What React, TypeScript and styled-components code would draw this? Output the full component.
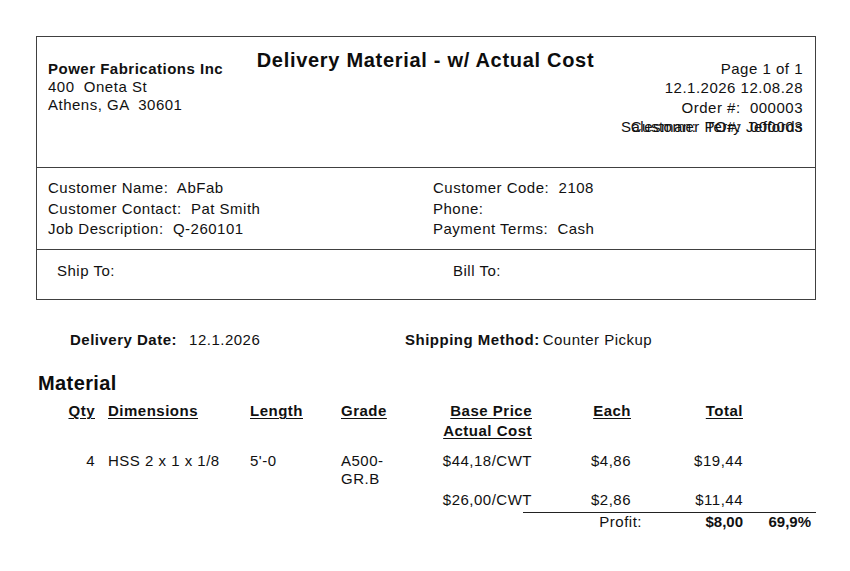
import React from "react";
import styled, { createGlobalStyle } from "styled-components";

const GlobalStyle = createGlobalStyle`
  html, body {
    margin: 0;
    padding: 0;
    background: #ffffff;
  }
  body {
    font-family: "Liberation Sans", Arial, sans-serif;
    color: #111111;
    font-size: 15px;
    letter-spacing: 0.5px;
  }
`;

const Page = styled.div`
  width: 850px;
  height: 571px;
  box-sizing: border-box;
  padding: 36px 0 0 36px;
`;

const Frame = styled.div`
  width: 780px;
  box-sizing: border-box;
  border: 1px solid #404040;
`;

const HeaderSection = styled.div`
  height: 130px;
  box-sizing: border-box;
  display: grid;
  grid-template-columns: 1fr auto 1fr;
  padding: 0 12px 0 11px;
`;

const Block = styled.div<{ $top: number; $align?: string }>`
  padding-top: ${(p) => p.$top}px;
  text-align: ${(p) => p.$align || "left"};
`;

const CompanyName = styled.div`
  font-weight: 700;
  font-size: 15px;
  letter-spacing: 0.5px;
  line-height: 18px;
`;

const Line = styled.div<{ $h?: number }>`
  line-height: ${(p) => p.$h || 18}px;
  white-space: pre;
`;

const Title = styled.h1`
  margin: 0;
  font-size: 20px;
  font-weight: 700;
  letter-spacing: 0.7px;
  line-height: 24px;
  color: #0d0d0d;
  white-space: nowrap;
`;

const Overlay = styled.div`
  display: grid;
  justify-items: end;
  & > * {
    grid-area: 1 / 1;
  }
`;

const Section = styled.div<{ $h: number; $top: number; $left: number; $col: number }>`
  height: ${(p) => p.$h}px;
  box-sizing: border-box;
  border-top: 1px solid #404040;
  padding: ${(p) => p.$top}px 0 0 ${(p) => p.$left}px;
  display: grid;
  grid-template-columns: ${(p) => p.$col}px 1fr;
  align-content: start;
`;

const InfoLine = styled.div`
  line-height: 20.5px;
  white-space: pre;
`;

const DeliveryRow = styled.div`
  margin-top: 30px;
  display: grid;
  grid-template-columns: 335px 1fr;
  padding-left: 34px;
  line-height: 20px;
`;

const Pair = styled.div<{ $gap: number }>`
  display: flex;
  gap: ${(p) => p.$gap}px;
  white-space: nowrap;
`;

const Label = styled.span`
  font-weight: 700;
  letter-spacing: 0.5px;
`;

const SectionTitle = styled.h2`
  margin: 21px 0 0 2px;
  font-size: 20px;
  font-weight: 700;
  letter-spacing: 0.4px;
  line-height: 24px;
  color: #0d0d0d;
`;

const cols = "59px 155px 91px 70px 121px 99px 112px 68px";

const TableRow = styled.div<{ $mt: number; $lh?: number }>`
  display: grid;
  grid-template-columns: ${cols};
  margin-top: ${(p) => p.$mt}px;
  line-height: ${(p) => p.$lh || 18}px;
`;

const Cell = styled.div<{ $right?: boolean; $pad?: number }>`
  text-align: ${(p) => (p.$right ? "right" : "left")};
  padding-left: ${(p) => p.$pad || 0}px;
`;

const HeadCell = styled(Cell)`
  font-weight: 700;
  letter-spacing: 0.5px;
  text-decoration: underline;
  text-underline-offset: 2px;
  text-decoration-thickness: 1px;
`;

const Rule = styled.div`
  margin: 3px 0 0 487px;
  width: 293px;
  height: 0;
  border-top: 1.5px solid #222;
`;

const TotalsRow = styled.div`
  display: grid;
  grid-template-columns: 606px 101px 68px;
  line-height: 18px;
`;

const TotalCell = styled.div<{ $bold?: boolean }>`
  text-align: right;
  font-weight: ${(p) => (p.$bold ? 700 : 400)};
  letter-spacing: ${(p) => (p.$bold ? "0px" : "0.5px")};
`;

export default function App() {
  return (
    <>
      <GlobalStyle />
      <Page>
        <Frame>
          <HeaderSection>
            <Block $top={23}>
              <CompanyName>Power Fabrications Inc</CompanyName>
              <Line>400  Oneta St</Line>
              <Line>Athens, GA  30601</Line>
            </Block>
            <Block $top={11} $align="center">
              <Title>Delivery Material - w/ Actual Cost</Title>
            </Block>
            <Block $top={22} $align="right">
              <Line $h={19.3}>Page 1 of 1</Line>
              <Line $h={19.3}>12.1.2026 12.08.28</Line>
              <Line $h={19.3}>Order #:  000003</Line>
              <Overlay>
                <Line $h={19.3}>Salesman:  Terry Jeffords</Line>
                <Line $h={19.3}>Customer PO#:  000003</Line>
              </Overlay>
            </Block>
          </HeaderSection>
          <Section $h={82} $top={10} $left={11} $col={385}>
            <div>
              <InfoLine>Customer Name:  AbFab</InfoLine>
              <InfoLine>Customer Contact:  Pat Smith</InfoLine>
              <InfoLine>Job Description:  Q-260101</InfoLine>
            </div>
            <div>
              <InfoLine>Customer Code:  2108</InfoLine>
              <InfoLine>Phone:</InfoLine>
              <InfoLine>Payment Terms:  Cash</InfoLine>
            </div>
          </Section>
          <Section $h={50} $top={11} $left={20} $col={396}>
            <InfoLine>Ship To:</InfoLine>
            <InfoLine>Bill To:</InfoLine>
          </Section>
        </Frame>

        <DeliveryRow>
          <Pair $gap={12}>
            <Label>Delivery Date:</Label>
            <span>12.1.2026</span>
          </Pair>
          <Pair $gap={3}>
            <Label>Shipping Method:</Label>
            <span>Counter Pickup</span>
          </Pair>
        </DeliveryRow>

        <SectionTitle>Material</SectionTitle>

        <TableRow $mt={6} $lh={20}>
          <HeadCell $right>Qty</HeadCell>
          <HeadCell $pad={13}>Dimensions</HeadCell>
          <HeadCell>Length</HeadCell>
          <HeadCell>Grade</HeadCell>
          <HeadCell $right>
            Base Price
            <br />
            Actual Cost
          </HeadCell>
          <HeadCell $right>Each</HeadCell>
          <HeadCell $right>Total</HeadCell>
          <Cell />
        </TableRow>

        <TableRow $mt={11}>
          <Cell $right>4</Cell>
          <Cell $pad={13}>HSS 2 x 1 x 1/8</Cell>
          <Cell>5'-0</Cell>
          <Cell>A500-GR.B</Cell>
          <Cell $right>$44,18/CWT</Cell>
          <Cell $right>$4,86</Cell>
          <Cell $right>$19,44</Cell>
          <Cell />
        </TableRow>

        <TableRow $mt={3}>
          <Cell />
          <Cell />
          <Cell />
          <Cell />
          <Cell $right>$26,00/CWT</Cell>
          <Cell $right>$2,86</Cell>
          <Cell $right>$11,44</Cell>
          <Cell />
        </TableRow>

        <Rule />
        <TotalsRow>
          <TotalCell>Profit:</TotalCell>
          <TotalCell $bold>$8,00</TotalCell>
          <TotalCell $bold>69,9%</TotalCell>
        </TotalsRow>
      </Page>
    </>
  );
}
